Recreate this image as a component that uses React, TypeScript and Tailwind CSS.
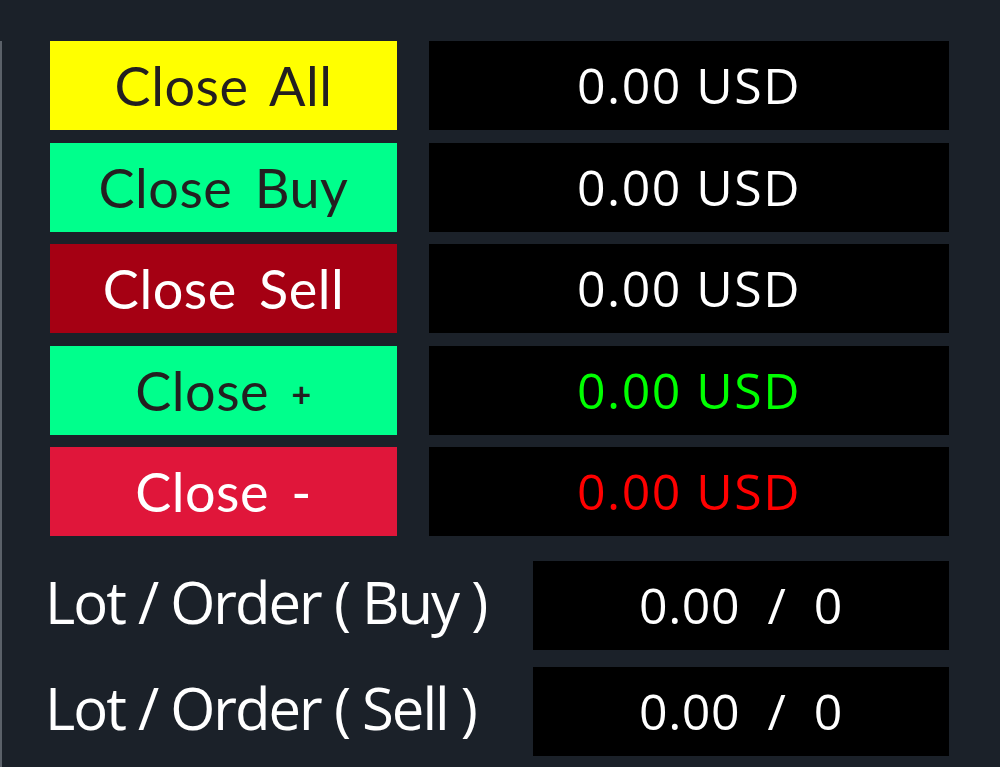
import React from 'react';

const closeRows = [
  { label: 'Close All', btn: 'bg-[#ffff00] text-[#231f20]', value: 'text-white' },
  { label: 'Close Buy', btn: 'bg-[#00ff8c] text-[#231f20]', value: 'text-white' },
  { label: 'Close Sell', btn: 'bg-[#a50013] text-white', value: 'text-white' },
  { label: 'Close +', btn: 'bg-[#00ff8c] text-[#231f20]', value: 'text-[#00ff00]' },
  { label: 'Close -', btn: 'bg-[#e0163a] text-white', value: 'text-[#ff0000]' },
];

const lotRows = ['Lot / Order ( Buy )', 'Lot / Order ( Sell )'];

export default function App() {
  return (
    <div className="w-[1000px] h-[767px] bg-[#1b2129] pt-[41px] overflow-hidden">
      <div className="h-full border-l-2 border-[#5b6169] flex flex-col">
        <div className="flex flex-col gap-[12.5px] pl-[48px]">
          {closeRows.map((r) => (
            <div key={r.label} className="flex gap-[32px]">
              <div
                className={`w-[347px] h-[89px] flex items-center justify-center text-[54px] tracking-[0.5px] [word-spacing:8px] font-['Lato',sans-serif] ${r.btn}`}
              >
                {r.label === 'Close +' ? (
                  <span>
                    Close <span className="text-[34px] font-bold align-[4px]">+</span>
                  </span>
                ) : (
                  r.label
                )}
              </div>
              <div
                className={`w-[520px] h-[89px] bg-black flex items-center justify-center text-[50px] font-['Open_Sans',sans-serif] tracking-[1.5px] ${r.value}`}
              >
                0.00 USD
              </div>
            </div>
          ))}
        </div>
        <div className="flex flex-col gap-[17px] mt-[25px] pl-[43px]">
          {lotRows.map((l) => (
            <div key={l} className="flex items-center justify-between pr-[51px]">
              <div className="text-white text-[58px] leading-none pb-[8px] font-['Open_Sans',sans-serif] tracking-[-2px]">
                {l}
              </div>
              <div className="w-[416px] h-[89px] bg-black flex items-center justify-center text-white text-[50px] font-['Open_Sans',sans-serif] tracking-[0.5px] [word-spacing:14px]">
                0.00 / 0
              </div>
            </div>
          ))}
        </div>
      </div>
    </div>
  );
}
